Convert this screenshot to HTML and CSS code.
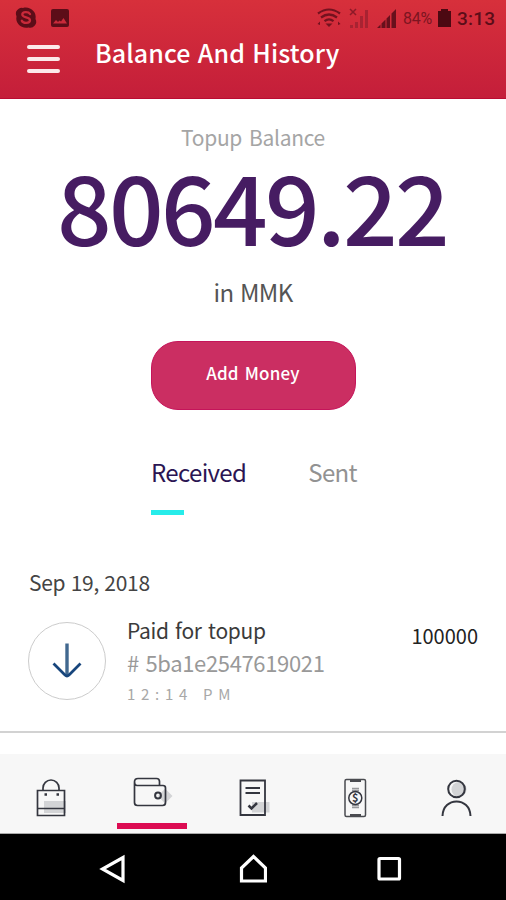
FILE: index.html
```html
<!DOCTYPE html>
<html lang="en">
<head>
    <meta charset="UTF-8">
    <meta name="viewport" content="width=device-width, initial-scale=1.0">
    <title>Balance And History</title>
    <link rel="stylesheet" href="styles.css">
</head>
<body>
<header class="header">
    <div class="status-bar">
        <div class="status-left">
            <svg width="24" height="24" viewBox="0 0 24 24">
                <path d="M2 6A6 6 0 0 1 9 2C16 0 23 6 21.500 13A6 6 0 0 1 14.500 21.500C7 23 1 17 2.500 10.500A7 7 0 0 1 2 6Z" fill="#5c0d18"/>
                <path d="M16 8C14.500 5.500 8.300 5.500 8.300 8.600C8.300 12.300 16 10.600 16 14.300C16 17.700 9 17.700 7.800 14.800" fill="none" stroke="#c92a3a" stroke-width="2.300" stroke-linecap="round"/>
            </svg>
            <svg width="20" height="20" viewBox="0 0 20 20">
                <rect x="1" y="1" width="18" height="18" rx="2" fill="#5c0d18"/>
                <path d="M3 15.500L6 12L8 14L9.500 12.500L11 13.500L13.500 10L17 15.500Z" fill="#c92a3a"/>
            </svg>
        </div>
        <div class="status-right">
            <svg class="wifi" width="24" height="20" viewBox="0 0 24 20" fill="none" stroke="#74121f" stroke-width="2.200">
                <path d="M1 5.500Q12 -2.500 23 5.500M4 9.500Q12 3.500 20 9.500M7.500 13.200Q12 9.500 16.500 13.200"/>
                <path d="M8.500 15.500H15.500L12 19Z" fill="#74121f" stroke="none"/>
                <path d="M0.500 16L3 13.500V17ZM23.500 16L21 13.500V17Z" fill="#74121f" stroke="none"/>
            </svg>
            <svg class="no-sim" width="20" height="20" viewBox="0 0 20 20">
                <path d="M1 1L7 7M7 1L1 7" stroke="#8c1a28" stroke-width="1.500"/>
                <path d="M1 17H4V20H1ZM6 14H9V20H6ZM11 8H14V20H11ZM16 2H19V20H16Z" fill="#a82332"/>
            </svg>
            <svg class="signal" width="19" height="20" viewBox="0 0 19 20" fill="#68101c">
                <path d="M0 20L3.500 16.500V20ZM4.500 15.500L8.500 11.500V20H4.500ZM9.500 10.500L13 7V20H9.500ZM14.500 5.500L19 1V20H14.500Z"/>
            </svg>
            <span class="percent">84%</span>
            <svg class="battery" width="13" height="18" viewBox="0 0 13 18">
                <path d="M3 0H10V2H13V18H0V2H3Z" fill="#4c0912"/>
            </svg>
            <span class="clock">3:13</span>
        </div>
    </div>
    <div class="title-bar">
        <div class="menu">
            <span></span>
            <span></span>
            <span></span>
        </div>
        <h1>Balance And History</h1>
    </div>
</header>

<main class="content">
    <section class="balance">
        <div class="balance-label">Topup Balance</div>
        <div class="balance-amount">80649.22</div>
        <div class="balance-currency">in MMK</div>
        <button class="add-money" type="button">Add Money</button>
    </section>

    <div class="tabs">
        <div class="tab active">Received</div>
        <div class="tab">Sent</div>
    </div>

    <section class="history">
        <div class="date">Sep 19, 2018</div>
        <div class="item">
            <div class="item-icon">
                <svg width="30" height="36" viewBox="0 0 30 36" fill="none" stroke="#17457c" stroke-width="2.800">
                    <path d="M15 0.500V33" stroke="#41688f" stroke-width="3.400"/>
                    <path d="M1.500 20.500L13 32Q15 34 17 32L28.500 20.500"/>
                </svg>
            </div>
            <div class="item-info">
                <div class="item-title">Paid for topup</div>
                <div class="item-id"># 5ba1e2547619021</div>
                <div class="item-time">12:14 PM</div>
            </div>
            <div class="item-amount">100000</div>
        </div>
    </section>
</main>

<nav class="bottom-nav">
    <div class="nav-item">
        <svg width="36" height="44" viewBox="0 0 36 44" fill="none" stroke="#34363f" stroke-width="1.700">
            <path d="M11 24H33V36H11Z" fill="#d3d4d6" stroke="none"/>
            <path d="M4.500 13.500H31.500V38.500H4.500ZM4.500 31.500H31.500"/>
            <path d="M10 13V11A8 8 0 0 1 26 11V13"/>
            <path d="M11.500 17.500H14M23.500 17.500H26" stroke-width="2.500"/>
        </svg>
    </div>
    <div class="nav-item active">
        <svg width="42" height="44" viewBox="0 0 42 44" fill="none" stroke="#34363f" stroke-width="1.700">
            <path d="M27 19L34 11.500L41.500 19L34 26.500Z" fill="#d3d4d6" stroke="none"/>
            <path d="M3.500 5.500V25.500Q3.500 28.500 6.500 28.500H31.500Q34.500 28.500 34.500 25.500V11Q34.500 8.500 32 8.500H6Q3.500 8.500 3.500 5Q3.500 1.500 7 1.500H25.500Q28.500 1.500 28.500 4.500V8.500"/>
            <circle cx="27" cy="18.500" r="2.900" stroke-width="2"/>
        </svg>
    </div>
    <div class="nav-item">
        <svg width="36" height="44" viewBox="0 0 36 44" fill="none" stroke="#34363f" stroke-width="1.800">
            <path d="M17 25H34.500V35.500H17Z" fill="#d3d4d6" stroke="none"/>
            <path d="M5.500 3.500H30V38H5.500Z"/>
            <path d="M10.500 11H25M10.500 16H25" stroke-width="2"/>
            <path d="M13.500 28.500L16.500 31.500L22 26" stroke-width="2.500"/>
        </svg>
    </div>
    <div class="nav-item">
        <svg width="36" height="44" viewBox="0 0 36 44" fill="none" stroke="#4a4b50" stroke-width="1.500">
            <rect x="9" y="2.500" width="20.500" height="37" rx="1.500"/>
            <path d="M14 4H25M14 38H25" stroke-width="2"/>
            <path d="M16 11.500H23M16 13.500H23M16 28.500H23M16 30.500H23" stroke="#97989b" stroke-width="1.400"/>
            <circle cx="19.300" cy="21" r="6.500" stroke="#34363f"/>
            <text class="coin" x="19.300" y="25" text-anchor="middle">$</text>
        </svg>
    </div>
    <div class="nav-item">
        <svg width="36" height="44" viewBox="0 0 36 44" fill="none" stroke="#34363f" stroke-width="2">
            <circle cx="22" cy="12.500" r="7.500" fill="#d3d4d6" stroke="none"/>
            <circle cx="19.500" cy="12" r="8.300"/>
            <path d="M5.500 39C6 19.500 33 19.500 33.500 39"/>
        </svg>
    </div>
</nav>

<footer class="system-bar">
    <svg class="back" width="28" height="30" viewBox="0 0 28 30">
        <path d="M24 3.500V26.500L3.500 15Z"/>
    </svg>
    <svg class="home" width="30" height="30" viewBox="0 0 30 30">
        <path d="M4.500 27V14L16.500 2.500L28.500 14V27Z"/>
    </svg>
    <svg class="recent" width="26" height="26" viewBox="0 0 26 26">
        <rect x="2" y="2.500" width="20.500" height="20.500" rx="1"/>
    </svg>
</footer>
</body>
</html>
```

FILE: styles.css
```css
* {
    box-sizing: border-box;
}

body {
    margin: 0;
    width: 506px;
    height: 900px;
    display: flex;
    flex-direction: column;
    overflow: hidden;
    background: #fff;
    font-family: "Noto Sans CJK SC", "Noto Sans", sans-serif;
}

svg {
    display: block;
    flex-shrink: 0;
}

.header {
    height: 99px;
    background: linear-gradient(#d7303b, #c41e3a);
    border-bottom: 1px solid #ba0c33;
}

.status-bar {
    height: 36px;
    padding: 0 11px 0 14px;
    display: flex;
    justify-content: space-between;
    align-items: center;
}

.status-left,
.status-right {
    display: flex;
    align-items: center;
}

.status-left {
    gap: 12px;
}

.status-right {
    font-family: Roboto, sans-serif;
}

.no-sim {
    margin-left: 8px;
}

.signal {
    margin-left: 8px;
}

.percent {
    width: 30px;
    margin-left: 7px;
    font-size: 16px;
    letter-spacing: -0.2px;
    color: #7c1521;
}

.battery {
    margin-left: 5px;
}

.clock {
    width: 38px;
    margin-left: 6px;
    font-size: 19px;
    font-weight: 500;
    letter-spacing: 0.2px;
    color: #5c0d18;
}

.title-bar {
    height: 46px;
    padding: 0 27px;
    display: flex;
    align-items: center;
}

.menu {
    width: 33px;
    height: 28px;
    display: flex;
    flex-direction: column;
    justify-content: space-between;
}

.menu span {
    height: 4px;
    border-radius: 2px;
    background: #fce9ea;
}

h1 {
    margin: -14px 0 0 35px;
    font-size: 25px;
    line-height: 36px;
    font-weight: 500;
    letter-spacing: 0.1px;
    word-spacing: 1.5px;
    white-space: nowrap;
    color: #fff;
}

.content {
    height: 655px;
}

.balance {
    display: flex;
    flex-direction: column;
    align-items: center;
    padding-top: 22px;
}

.balance-label {
    font-size: 21px;
    line-height: 32px;
    letter-spacing: -0.3px;
    word-spacing: 2.5px;
    color: #a5a5a5;
}

.balance-amount {
    margin: 2px 2px 0 0;
    font-size: 96px;
    line-height: 100px;
    font-weight: 500;
    letter-spacing: -2.7px;
    color: #461c62;
}

.balance-currency {
    margin-top: 19px;
    font-size: 24px;
    line-height: 36px;
    letter-spacing: -0.7px;
    word-spacing: 2px;
    color: #555;
}

.add-money {
    width: 205px;
    height: 69px;
    margin-top: 31px;
    padding: 0 0 7px;
    border: 1px solid #c5145a;
    border-radius: 27px;
    background: #cb2e62;
    color: #fff;
    font-family: inherit;
    font-size: 17px;
    font-weight: 500;
    letter-spacing: 0.2px;
    word-spacing: 2px;
}

.tabs {
    display: flex;
    justify-content: space-between;
    width: 206px;
    margin: 44px 0 0 151px;
}

.tab {
    font-size: 24px;
    line-height: 36px;
    letter-spacing: -0.65px;
    color: #929292;
}

.tab.active {
    color: #2b1553;
}

.tab.active::after {
    content: "";
    display: block;
    width: 33px;
    height: 5px;
    margin-top: 20px;
    background: #27ecea;
}

.history {
    margin-top: 51px;
    border-bottom: 2px solid #d2d2d2;
    padding: 0 28px 32px;
}

.date {
    padding-left: 1px;
    font-size: 21px;
    line-height: 32px;
    letter-spacing: -0.3px;
    word-spacing: 1px;
    color: #444;
}

.item {
    height: 77px;
    display: flex;
    align-items: flex-start;
    margin-top: 24px;
}

.item-icon {
    width: 78px;
    height: 78px;
    display: flex;
    align-items: center;
    justify-content: center;
    border: 1.500px solid #ccc;
    border-radius: 50%;
}

.item-info {
    flex: 1;
    margin: -7px 0 0 21px;
    white-space: nowrap;
}

.item-title {
    font-size: 21px;
    line-height: 30px;
    letter-spacing: -0.3px;
    word-spacing: 2px;
    color: #3b3b3b;
}

.item-id {
    font-size: 22px;
    line-height: 34px;
    letter-spacing: -0.35px;
    word-spacing: 2px;
    color: #999;
}

.item-time {
    font-size: 15px;
    line-height: 30px;
    letter-spacing: 5.7px;
    word-spacing: 1px;
    color: #a8a8a8;
}

.item-amount {
    margin-top: -1px;
    font-size: 20px;
    line-height: 30px;
    color: #222;
}

.bottom-nav {
    height: 80px;
    padding-top: 23px;
    display: flex;
    background: #f7f7f7;
    border-bottom: 1px solid #aaa;
}

.nav-item {
    flex: 1;
    display: flex;
    flex-direction: column;
    align-items: center;
}

.nav-item.active::after {
    content: "";
    width: 70px;
    height: 6px;
    margin-top: 2px;
    background: #dc0c53;
}

.coin {
    font-size: 11px;
    font-weight: bold;
    fill: #34363f;
    stroke: none;
}

.system-bar {
    height: 66px;
    padding: 4px 103px 0 99px;
    display: flex;
    justify-content: space-between;
    align-items: center;
    background: #000;
}

.system-bar svg {
    fill: none;
    stroke: #fff;
    stroke-width: 3.200;
}
```
